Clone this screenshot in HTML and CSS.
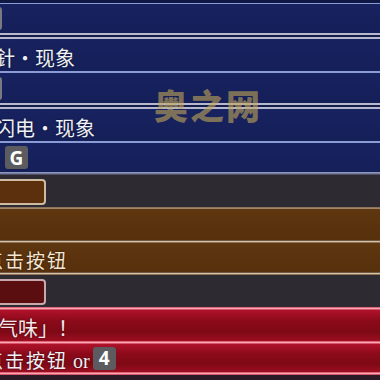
FILE: index.html
```html
<!DOCTYPE html>
<html>
<head>
<meta charset="utf-8">
<link rel="stylesheet" href="styles.css">
</head>
<body>
<div class="screen">
  <div class="band navy h3"></div>
  <div class="line blue-line h1"></div>
  <div class="band blue h29"><span class="key key-edge"></span></div>
  <div class="dline"></div>
  <div class="band blue h32"><span class="label">針・现象</span></div>
  <div class="line blue-line h2"></div>
  <div class="band blue h30"><span class="key key-edge"></span></div>
  <div class="dline"></div>
  <div class="band blue h32"><span class="label">闪电・现象</span></div>
  <div class="line blue-line h2"></div>
  <div class="band blue h29"><span class="key key-g">G</span></div>
  <div class="line gray-line h3"></div>
  <div class="band dark h32"><span class="box box-brown"></span></div>
  <div class="line tan-line h2"></div>
  <div class="band brown h31"></div>
  <div class="line tan-line h3"></div>
  <div class="band brown h29"><span class="label label-cream label-shift">点击按钮</span></div>
  <div class="line tan-line h3"></div>
  <div class="band dark h32"><span class="box box-red"></span></div>
  <div class="line pink-line h3"></div>
  <div class="band red h31"><span class="label label-red">气味」！</span></div>
  <div class="line pink-line h3"></div>
  <div class="band red h28"><span class="label label-shift">点击按钮<span class="latin"> or </span></span><span class="key key-4">4</span></div>
  <div class="line pink-line h3"></div>
  <div class="band bottom h5"></div>
  <div class="watermark">奥之网</div>
</div>
</body>
</html>
```

FILE: styles.css
```css
html, body {
  margin: 0;
  padding: 0;
  background: #1a1a2a;
}

.screen {
  position: relative;
  width: 380px;
  height: 380px;
  overflow: hidden;
  display: flex;
  flex-direction: column;
  font-family: "Noto Sans CJK SC", "Noto Sans", sans-serif;
}

.band {
  flex: none;
  display: flex;
  align-items: center;
}

.line { flex: none; }

.h1 { height: 1px; }
.h2 { height: 2px; }
.h3 { height: 3px; }
.h5 { height: 5px; }
.h28 { height: 28px; }
.h29 { height: 29px; }
.h30 { height: 30px; }
.h31 { height: 31px; }
.h32 { height: 32px; }

.navy { background: #0f1743; }
.blue { background: linear-gradient(#172260, #151f58); }
.dark { background: #2d2a31; }
.brown { background: linear-gradient(#5e360f, #57300d); }
.red { background: linear-gradient(#b0122a 0%, #8c0a1a 35%, #7e0915 70%, #9c0e22 100%); }
.bottom { background: #2a1a26; }

.blue-line { background: #8a9bd6; }
.gray-line { background: linear-gradient(#9aa4d0, #6c7290 60%, #3a3744); }
.tan-line { background: linear-gradient(#3a2410, #d9c3a8 50%, #6a4a2a); }
.pink-line { background: linear-gradient(#d0485e, #ffa4b0 50%, #c03048); }

.dline {
  flex: none;
  height: 6px;
  background: linear-gradient(#b8b8cc 0, #b8b8cc 2px, #141c4a 2px, #141c4a 4px, #b8b8cc 4px, #b8b8cc 6px);
}

.label {
  color: #eef0f6;
  font-size: 20px;
  line-height: 20px;
  margin-left: -5px;
  margin-top: 5px;
  white-space: nowrap;
  text-shadow: 0 0 2px rgba(0,0,0,0.6);
}

.label-cream { color: #f4e6d2; }
.label-shift {
  margin-left: -16px;
  font-size: 19px;
  letter-spacing: 2px;
}
.label-red { margin-left: -2px; color: #f6e8ea; }

.latin {
  font-family: "Liberation Serif", serif;
  font-size: 20px;
  letter-spacing: 0;
}

.key {
  flex: none;
  display: flex;
  align-items: center;
  justify-content: center;
  width: 23px;
  height: 23px;
  border-radius: 3px;
  background: #5c5c60;
  color: #ffffff;
  font-family: "Open Sans", "Noto Sans", sans-serif;
  font-weight: 700;
  font-size: 19px;
  box-sizing: border-box;
}

.key-edge {
  margin-left: -21px;
  background: #7a7a82;
}

.key-g { margin-left: 5px; }
.key-4 { margin-left: 3px; }

.box {
  flex: none;
  width: 60px;
  height: 26px;
  margin-left: -14px;
  margin-top: 2px;
  box-sizing: border-box;
  border: 2px solid #cdbba2;
  border-radius: 4px;
}

.box-brown { background: #5c300c; }
.box-red { background: #5a0e10; border-color: #c8a8aa; }

.watermark {
  position: absolute;
  left: 154px;
  top: 80px;
  font-family: "Noto Sans CJK SC", sans-serif;
  font-weight: 900;
  font-size: 34px;
  letter-spacing: 2px;
  color: rgba(196, 168, 88, 0.62);
}
```
